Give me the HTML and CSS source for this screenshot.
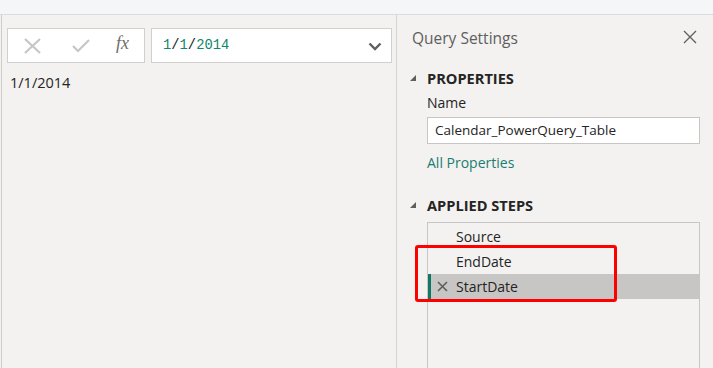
FILE: index.html
```html
<!DOCTYPE html>
<html>
<head>
<meta charset="utf-8">
<link rel="stylesheet" href="styles.css">
</head>
<body>
<div class="topbar"></div>
<div class="main">
  <div class="left">
    <div class="formula-row">
      <div class="btns">
        <svg class="ic-x" width="20" height="16" viewBox="0 0 20 16"><path d="M2 1 L17 15 M17 1 L2 15" stroke="#c8c6c4" stroke-width="2.2" fill="none"/></svg>
        <svg class="ic-check" width="18" height="14" viewBox="0 0 18 14"><path d="M1 7 L6 12 L17 1" stroke="#c8c6c4" stroke-width="2.2" fill="none"/></svg>
        <span class="fx">fx</span>
      </div>
      <div class="formula">
        <span class="code"><span class="num">1</span>/<span class="num">1</span>/<span class="num">2014</span></span>
        <svg class="chev" width="14" height="9" viewBox="0 0 14 9"><path d="M1.5 1.5 L7 7 L12.5 1.5" stroke="#605e5c" stroke-width="2.4" fill="none"/></svg>
      </div>
    </div>
    <div class="cell">1/1/2014</div>
  </div>
  <div class="right">
    <div class="qs-head">
      <span class="qs-title">Query Settings</span>
      <svg class="close" width="14" height="14" viewBox="0 0 14 14"><path d="M1 1 L13 13 M13 1 L1 13" stroke="#605e5c" stroke-width="1.3" fill="none"/></svg>
    </div>
    <div class="section">
      <span class="tri"></span><span class="sec-title">PROPERTIES</span>
    </div>
    <div class="field">
      <div class="label">Name</div>
      <div class="input">Calendar_PowerQuery_Table</div>
      <div class="link">All Properties</div>
    </div>
    <div class="section steps-sec">
      <span class="tri"></span><span class="sec-title">APPLIED STEPS</span>
    </div>
    <div class="steps">
      <div class="step">Source</div>
      <div class="step">EndDate</div>
      <div class="step active">
        <svg class="del" width="11" height="11" viewBox="0 0 11 11"><path d="M1 1 L10 10 M10 1 L1 10" stroke="#605e5c" stroke-width="1.6" fill="none"/></svg>StartDate
      </div>
      <div class="highlight"></div>
    </div>
  </div>
</div>
</body>
</html>
```
FILE: styles.css
```css
html, body {
  margin: 0;
  padding: 0;
  height: 100%;
  overflow: hidden;
}
body {
  background: #f3f2f1;
  font-family: "Segoe UI", "Open Sans", sans-serif;
  color: #252423;
}
.topbar {
  height: 14px;
  background: #f5f6f7;
  border-bottom: 1px solid #dadbdc;
}
.main {
  display: flex;
  height: 353px;
  overflow: hidden;
}
.left {
  width: 389px;
  flex-shrink: 0;
  margin-left: 1px;
  border-left: 1px solid #cfcdcb;
  border-right: 1px solid #d6d4d2;
  padding: 13px 0 0 5px;
}
.formula-row {
  display: flex;
  gap: 6px;
  height: 35px;
}
.btns {
  width: 136px;
  height: 33px;
  background: #fff;
  border: 1px solid #d2d0ce;
  display: flex;
  align-items: center;
}
.ic-x { margin-left: 15px; margin-top: 1px; }
.ic-check { margin-left: 29px; margin-top: 1px; }
.fx {
  margin-left: 26px;
  font-family: "Liberation Serif", serif;
  font-style: italic;
  font-size: 18px;
  color: #6f6d6b;
  margin-top: -4px;
}
.formula {
  width: 219px;
  height: 33px;
  background: #fff;
  border: 1px solid #d2d0ce;
  display: flex;
  align-items: center;
  justify-content: space-between;
  padding: 0 9px 0 11px;
}
.code {
  font-family: "Liberation Mono", monospace;
  font-size: 13.8px;
  color: #222;
}
.num { color: #11866a; }
.chev { margin-top: 1px; }
.cell {
  margin-top: 10px;
  margin-left: 3px;
  font-size: 14.5px;
}
.right {
  flex: 1;
  padding-left: 13px;
}
.qs-head {
  display: flex;
  justify-content: space-between;
  align-items: center;
  height: 46px;
  padding-right: 16px;
}
.qs-title {
  font-size: 15.5px;
  color: #605e5c;
  margin-left: 2px;
  margin-top: -1px;
}
.close { margin-top: -2px; }
.section {
  display: flex;
  align-items: center;
  height: 34px;
}
.tri {
  width: 0;
  height: 0;
  border-left: 6px solid transparent;
  border-bottom: 6px solid #605e5c;
  margin-right: 11px;
}
.sec-title {
  font-weight: bold;
  font-size: 14.6px;
  color: #252423;
}
.field {
  margin-left: 17px;
  margin-right: 13px;
}
.label {
  font-size: 14px;
  line-height: 18px;
  margin-top: -1px;
}
.input {
  margin-top: 5px;
  height: 25px;
  background: #fff;
  border: 1px solid #c8c6c4;
  font-size: 13.5px;
  line-height: 25px;
  padding-left: 7px;
}
.link {
  color: #1a7d6e;
  font-size: 14px;
  margin-top: 9px;
  height: 24px;
}
.steps-sec {
  margin-top: 11px;
  height: 34px;
}
.steps {
  margin-left: 17px;
  margin-right: 13px;
  height: 146px;
  border: 1px solid #c8c6c4;
  border-bottom: none;
  padding-top: 1px;
  position: relative;
}
.step {
  height: 25px;
  font-size: 14px;
  padding-left: 28px;
  display: flex;
  align-items: center;
}
.step.active {
  background: #c8c6c4;
  border-left: 3px solid #117865;
  padding-left: 6px;
}
.del { margin-right: 8px; }
.highlight {
  position: absolute;
  left: -13px;
  top: 22px;
  width: 196px;
  height: 51px;
  border: 3px solid #fe0000;
  border-radius: 3px;
}
```
